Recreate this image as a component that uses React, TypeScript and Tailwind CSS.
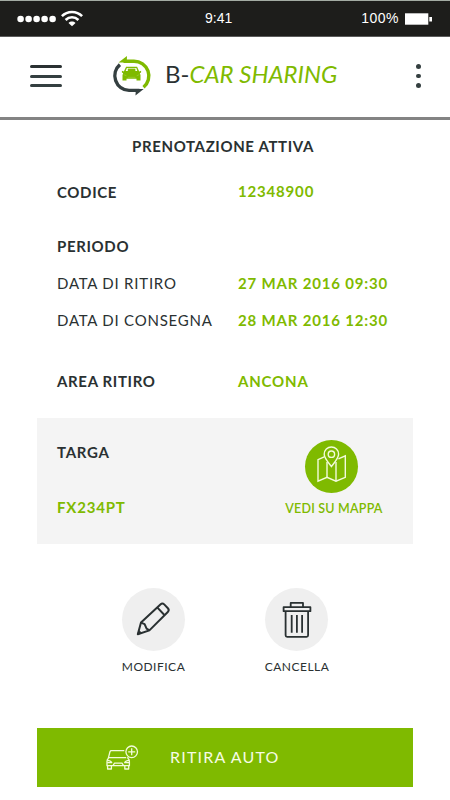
interface RowProps {
  label: string;
  value?: string;
  className?: string;
  labelClass?: string;
  valueClass?: string;
}

const Row = ({ label, value, className = "", labelClass = "font-bold tracking-[0.65px]", valueClass = "" }: RowProps) => {
  return (
    <div className={`flex h-9 items-center pl-[57px] text-[15px] leading-5 ${className}`}>
      <span className={`w-[181px] shrink-0 whitespace-nowrap ${labelClass}`}>{label}</span>
      {value && (
        <span className={`font-bold tracking-[0.82px] whitespace-nowrap text-[#7fba00] ${valueClass}`}>
          {value}
        </span>
      )}
    </div>
  );
};

const StatusBar = () => {
  return (
    <div className="relative flex h-[37px] items-center justify-between border-t border-b border-t-[#a3aba3] border-b-[#5b5b5b] bg-[#1d1d1b] pr-[17px] pl-[17px] font-['Liberation_Sans'] text-[14px] text-white">
      <div className="flex items-center gap-[5px]">
        <svg width="39" height="8" viewBox="0 0 39 8" fill="#fff">
          <circle cx="3.6" cy="4" r="3.3" />
          <circle cx="11.6" cy="4" r="3.3" />
          <circle cx="19.6" cy="4" r="3.3" />
          <circle cx="27.6" cy="4" r="3.3" />
          <circle cx="35.6" cy="4" r="3.3" />
        </svg>
        <svg width="22" height="17" viewBox="0 0 22 17" fill="none" stroke="#fff" strokeWidth="2.6">
          <path d="M0.9 6.2C6.4 0.6 15.6 0.6 21.1 6.2" />
          <path d="M4.6 10C8.2 6.4 13.8 6.4 17.4 10" />
          <path d="M7.5 12.9C9.5 11 12.5 11 14.5 12.9L11 16.2Z" fill="#fff" stroke="none" />
        </svg>
      </div>
      <span className="absolute left-[205px]">9:41</span>
      <div className="flex items-center gap-[6px]">
        <span className="tracking-[0.5px]">100%</span>
        <svg width="28" height="12" viewBox="0 0 28 12" fill="#fff">
          <path d="M0 0.3H23.3V11.7H0Z" />
          <path d="M24.3 4H27V8.5H24.3Z" />
        </svg>
      </div>
    </div>
  );
};

const Logo = () => {
  return (
    <svg width="40" height="40" viewBox="0.5 -1 40 40" fill="none">
      <path d="M12 4.2H22.5A14.9 14.7 0 0 1 32 30.2" stroke="#7fba00" strokeWidth="3.4" />
      <path d="M7 5.6L15.5 -1L15.2 5.6Z" fill="#7fba00" />
      <path d="M8.4 7.6A14.7 14.7 0 0 0 17.5 33.4H28" stroke="#343f40" strokeWidth="3.4" />
      <path d="M32.2 32L24 38.4L24.4 32Z" fill="#343f40" />
      <path
        fill="#7fba00"
        fillRule="evenodd"
        d="M14.6 9.7H25.6L27.7 14.6L29.6 13.7V15.5L28.3 16.3L29 18V23.6H25V21.8H15V23.6H11V18L11.7 16.3L10.4 15.5V13.7L12.3 14.6ZM15.4 11L14.2 14H25.8L24.8 11Z"
      />
      <path d="M16.3 11.6H23.9V14H16.3Z" fill="#7fba00" />
      <path d="M12.2 17.6L15 18.8M27.8 17.6L25.2 18.8M16.3 20.3H24" stroke="#a5d04a" strokeWidth="0.6" />
    </svg>
  );
};

const Header = () => {
  return (
    <header className="flex h-[83px] items-center border-b-[3px] border-[#838383] bg-white pb-[2px] pl-[30px]">
      <button className="flex h-[22px] w-8 flex-col justify-between" aria-label="Menu">
        <span className="h-[3px] w-full rounded-full bg-[#2a3132]" />
        <span className="h-[3px] w-full rounded-full bg-[#343f40]" />
        <span className="h-[3px] w-full rounded-full bg-[#343f40]" />
      </button>
      <div className="ml-[50px] flex w-[53px] items-center">
        <Logo />
      </div>
      <h1 className="w-[251px] pb-1 text-[24px] leading-[30px] whitespace-nowrap">
        B-<span className="text-[#7fba00] italic">CAR SHARING</span>
      </h1>
      <button className="flex flex-col gap-[4.6px]" aria-label="Altro">
        <span className="size-[4.8px] rounded-full bg-[#343f40]" />
        <span className="size-[4.8px] rounded-full bg-[#343f40]" />
        <span className="size-[4.8px] rounded-full bg-[#343f40]" />
      </button>
    </header>
  );
};

const MapIcon = () => {
  return (
    <svg width="53" height="53" viewBox="0 0 53 53" fill="none" stroke="#f3fbdc" strokeWidth="1.4">
      <path d="M19.2 16.8L13 19.6V41.2L22 37.3L31 41.2L40.3 37.3V15.8L33.4 18.8" />
      <path d="M22 22V37.3M31 22V41.2" />
      <path d="M26.4 26.5C23.3 22.5 19.2 18 19.2 14.2A7.2 7.2 0 0 1 33.6 14.2C33.6 18 29.5 22.5 26.4 26.5Z" />
      <circle cx="26.4" cy="14.2" r="3.2" />
    </svg>
  );
};

const PencilIcon = () => {
  return (
    <svg width="63" height="63" viewBox="0 0 63 63" fill="none" stroke="#2a3132" strokeWidth="2" strokeLinejoin="round">
      <path d="M15.8 46.3L19 34.6L38.4 16.4C39.6 15.3 41.1 15.3 42.2 16.4L45.9 20.3C47 21.5 47 22.8 45.8 24L27.4 42.4Z" />
      <path d="M35.2 19.4L42.4 27M19 34.6L22.6 36.2L24.6 40.6L27.4 42.4" />
      <path d="M15.8 46.3L16.9 42.4L19.5 45Z" fill="#2a3132" strokeWidth="1" />
    </svg>
  );
};

const TrashIcon = () => {
  return (
    <svg width="63" height="63" viewBox="0 0 63 63" fill="none" stroke="#2a3132" strokeWidth="1.8" strokeLinejoin="round">
      <path d="M18.6 19.2H45.4V23.2H18.6Z" />
      <path d="M25.7 19.2V14.9H38V19.2" />
      <path d="M20.6 23.2V47.3C20.6 48.2 21.2 48.8 22.1 48.8H41.6C42.5 48.8 43.1 48.2 43.1 47.3V23.2" />
      <path d="M26.7 27V44.8M31.9 27V44.8M37.1 27V44.8" />
    </svg>
  );
};

const CarPlusIcon = () => {
  return (
    <svg width="33" height="26" viewBox="0 0 33 26" fill="none" stroke="#f3fbdc" strokeWidth="1.3" strokeLinejoin="round">
      <path d="M18.3 5.7H5.4C4.6 5.7 4.2 6 4 6.7L2.2 13.6C1.3 14.4 1 15.3 1 16.5V20.7H23.4V16.5C23.4 15.3 23 14.4 22.1 13.6L21.7 12" />
      <path d="M3 12.6H20.2M1.2 15.3C3.2 15.3 5 16 5.7 17.6H1.2M23.2 15.3C21.2 15.3 19.4 16 18.7 17.6H23.2" />
      <path d="M7 20.5L8.5 18.2H16L17.5 20.5" />
      <path d="M1.6 20.7V24H5.4V20.7M18.8 20.7V24H22.7V20.7" />
      <circle cx="25.7" cy="6.8" r="5.8" />
      <path d="M25.7 3.3V10.3M22.2 6.8H29.2" />
    </svg>
  );
};

const App = () => {
  return (
    <div className="h-[800px] w-[450px] overflow-hidden bg-white font-['Lato',sans-serif] text-[#2a3132]">
      <StatusBar />
      <Header />
      <main>
        <h2 className="mt-2 flex h-9 items-center pl-[132px] text-[15px] font-bold tracking-[0.63px]">
          PRENOTAZIONE ATTIVA
        </h2>
        <Row label="CODICE" value="12348900" className="mt-[10px]" valueClass="-mt-[3px]" />
        <Row label="PERIODO" className="mt-[18px]" />
        <Row label="DATA DI RITIRO" value="27 MAR 2016 09:30" className="mt-px" labelClass="tracking-[0.77px]" />
        <Row label="DATA DI CONSEGNA" value="28 MAR 2016 12:30" className="mt-px" labelClass="tracking-[0.77px]" />
        <Row label="AREA RITIRO" value="ANCONA" className="mt-[25px]" />

        <section className="mx-[37px] mt-[19px] flex h-[126px] justify-between bg-[#f4f4f4] pl-5">
          <div className="flex flex-col pt-[24px] text-[15px] leading-5 font-bold">
            <span className="tracking-[0.7px]">TARGA</span>
            <span className="mt-[35px] tracking-[0.8px] text-[#7fba00]">FX234PT</span>
          </div>
          <button className="flex w-[163px] flex-col items-center pt-[22px]">
            <span className="size-[53px] rounded-full bg-[#7fba00]">
              <MapIcon />
            </span>
            <span className="mt-[8px] ml-[5px] text-[12.5px] leading-4 font-semibold tracking-[0.2px] whitespace-nowrap text-[#7fba00]">
              VEDI SU MAPPA
            </span>
          </button>
        </section>

        <div className="mt-[44px] flex gap-[40px] pl-[102px] text-[12px] leading-4 tracking-[0.5px]">
          <button className="flex w-[103px] flex-col items-center">
            <span className="size-[63px] rounded-full bg-[#efefef]">
              <PencilIcon />
            </span>
            <span className="mt-2">MODIFICA</span>
          </button>
          <button className="flex w-[103px] flex-col items-center">
            <span className="size-[63px] rounded-full bg-[#efefef]">
              <TrashIcon />
            </span>
            <span className="mt-2 ml-px">CANCELLA</span>
          </button>
        </div>

        <button className="mt-[53px] ml-[37px] flex h-[59px] w-[376px] items-center bg-[#7fba00] pl-[69px] text-[16px] tracking-[1.2px] text-[#f6fce4]">
          <CarPlusIcon />
          <span className="ml-[31px] pb-[2px]">RITIRA AUTO</span>
        </button>
      </main>
    </div>
  );
};

export default App;
